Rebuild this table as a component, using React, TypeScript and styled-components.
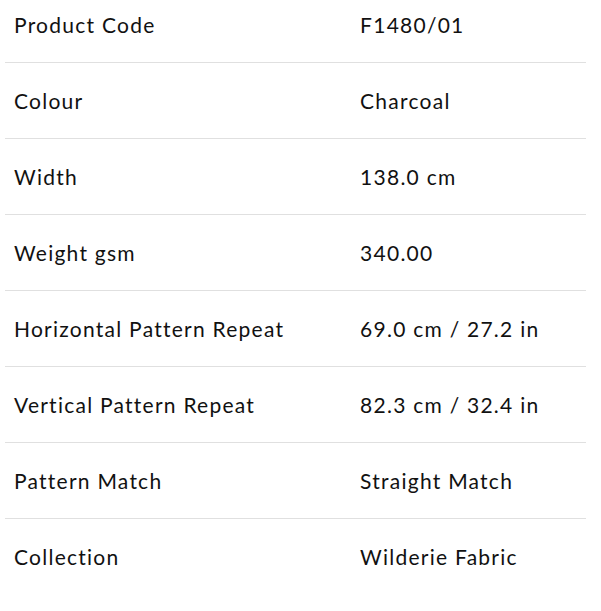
import React from "react";
import styled, { createGlobalStyle } from "styled-components";

const Global = createGlobalStyle`
  html, body { margin: 0; padding: 0; background: #ffffff; }
  body { font-family: "Lato", "Liberation Sans", sans-serif; color: #111111; }
`;

const Wrapper = styled.div`
  padding: 0 15px 0 5px;
`;

const Table = styled.table`
  width: 100%;
  border-collapse: collapse;
  table-layout: fixed;
`;

const Row = styled.tr`
  border-bottom: 1px solid #e0e0e0;
  &:last-child { border-bottom: none; }
`;

const Cell = styled.td<{ $first?: boolean; $label?: boolean }>`
  width: ${(p) => (p.$label ? "60%" : "40%")};
  padding: ${(p) => (p.$first ? "13px" : "26px")} 9px 25px ${(p) => (p.$label ? "9px" : "11px")};
  font-size: 21px;
  line-height: 24px;
  letter-spacing: 1.25px;
  font-weight: 400;
  color: #111111;
  vertical-align: middle;
  text-align: left;
  white-space: nowrap;
`;

const rows: [string, string][] = [
  ["Product Code", "F1480/01"],
  ["Colour", "Charcoal"],
  ["Width", "138.0 cm"],
  ["Weight gsm", "340.00"],
  ["Horizontal Pattern Repeat", "69.0 cm / 27.2 in"],
  ["Vertical Pattern Repeat", "82.3 cm / 32.4 in"],
  ["Pattern Match", "Straight Match"],
  ["Collection", "Wilderie Fabric"],
];

export default function App() {
  return (
    <>
      <Global />
      <Wrapper>
        <Table>
          <tbody>
            {rows.map(([k, v], i) => (
              <Row key={k}>
                <Cell $label $first={i === 0}>{k}</Cell>
                <Cell $first={i === 0}>{v}</Cell>
              </Row>
            ))}
          </tbody>
        </Table>
      </Wrapper>
    </>
  );
}
